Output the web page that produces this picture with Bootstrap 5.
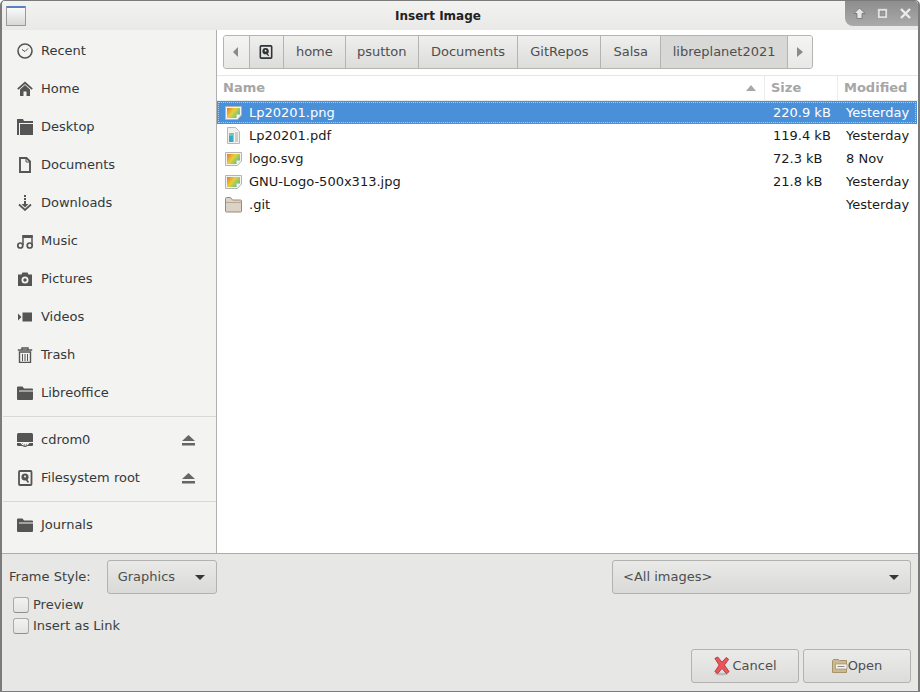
<!DOCTYPE html>
<html lang="en">
<head>
    <meta charset="UTF-8">
    <title>Insert Image</title>
    <link href="https://cdn.jsdelivr.net/npm/bootstrap@5.3.0/dist/css/bootstrap.min.css" rel="stylesheet">
    <style>
        html, body { margin: 0; height: 692px; overflow: hidden; background: #fff; }
        body { font-family: "DejaVu Sans", sans-serif; font-size: 13px; color: #33393b; }
        .dlg-window { width: 920px; height: 692px; border: 1px solid #7b7b7b; border-left-width: 2px; border-right-width: 2px; border-radius: 5px 5px 0 0; overflow: hidden; }

        .dlg-title { height: 29px; flex: none; background: linear-gradient(#f2f2f0, #e9e9e7); }
        .dlg-appicon { width: 20px; height: 20px; margin: 5px 0 0 4px; border: 1px solid #9a9a9a; border-radius: 1px; background: linear-gradient(#fafafa, #d8d8d8); border-top: 2px solid #5b82bd; }
        .dlg-title-text { font-weight: 700; font-size: 12px; color: #222; line-height: 30px; text-align: center; flex: 1; padding-left: 5px; }
        .dlg-winbtns { width: 73px; height: 25px; background: linear-gradient(#8d8d8d, #aaa); border-radius: 0 0 0 8px; gap: 10px; padding-left: 8px; }

        .dlg-side { width: 215px; background: #f3f3f1; border-right: 1px solid #b0b0ae; padding-top: 2px; }
        .side-row { height: 38px; padding-left: 15px; gap: 8px; }
        .side-row span { flex: 1; }
        .side-row svg { flex: none; }
        .side-eject { margin-right: 21px; }
        .side-sep { height: 1px; background: #d8d8d6; margin: 4px 0 4px 1px; }

        .dlg-main { background: #fff; min-width: 0; }
        .path-wrap { height: 46px; padding: 5px 0 0 6px; border-bottom: 1px solid #e6e6e4; }
        .path-bar { width: 590px; height: 34px; border: 1px solid #b4b4b2; border-radius: 3px; overflow: hidden; background: linear-gradient(#efefed, #dcdcda); color: #4d4f50; }
        .path-seg { height: 100%; border-right: 1px solid #b4b4b2; justify-content: center; align-items: center; display: flex; }
        .path-seg:last-child { border-right: 0; }
        .path-seg.current { background: #d8d8d6; }
        .path-seg.arrowseg { background: linear-gradient(#f4f4f2, #e8e8e6); }

        .list-head { height: 25px; font-weight: 700; color: #a6a6a6; border-bottom: 1px solid #ececea; }
        .list-head > div { padding-left: 6px; line-height: 24px; border-right: 1px solid #ececea; }
        .col-fname { width: 548px; }
        .col-fsize { width: 73px; }
        .col-fdate { width: 79px; }
        .file-row { height: 23px; color: #1a1a1a; align-items: center; width: 700px; }
        .file-row .col-fname { padding-left: 8px; gap: 7px; display: flex; align-items: center; }
        .file-row .col-fsize { padding-left: 8px; }
        .file-row .col-fdate { padding-left: 8px; white-space: nowrap; }
        .file-row.picked { background: #4a90d9; color: #fff; outline: 1px dotted #a9ccef; outline-offset: -2px; }

        .dlg-bottom { background: #e7e7e5; height: 138px; flex: none; border-top: 1px solid #acacaa; padding: 6px 7px 0 7px; color: #3c3f40; }
        .combo-box { height: 34px; border: 1px solid #b2b2b0; border-radius: 3px; background: linear-gradient(#e9e9e7, #d9d9d7); padding: 0 11px 0 10px; color: #4d4f50; }
        .combo-frame { width: 110px; margin-left: 16px; }
        .combo-all { width: 299px; }
        .combo-caret { width: 0; height: 0; border-left: 5px solid transparent; border-right: 5px solid transparent; border-top: 5px solid #33393b; }
        .check-row { height: 21px; padding-left: 4px; gap: 4px; }
        .check-mark { width: 16px; height: 16px; border: 1px solid #aaa; border-bottom-color: #8f8f8f; border-radius: 3px; background: linear-gradient(#f2f2f0, #e4e4e2); }
        .dlg-btn { width: 108px; height: 34px; border: 1px solid #b2b2b0; border-radius: 3px; background: linear-gradient(#ebebe9, #dcdcda); color: #4d4f50; }
        .btn-zone { margin-top: 13px; gap: 4px; }
        .cancel-icon { margin-right: 1px; }
    </style>
</head>
<body>
<div class="dlg-window d-flex flex-column">
    <div class="dlg-title d-flex">
        <div class="dlg-appicon"></div>
        <div class="dlg-title-text">Insert Image</div>
        <div class="dlg-winbtns d-flex align-items-center">
            <svg width="13" height="13" viewBox="0 0 13 13"><path d="M6.500 1 1 6.500h3v5h5v-5h3z" fill="#e6e6e6" stroke="#666" stroke-width=".7"/></svg>
            <svg width="13" height="13" viewBox="0 0 13 13"><path d="M1.500 1.500h10v10h-10z M4 4v5h5V4z" fill="#e0e0e0" fill-rule="evenodd" stroke="#777" stroke-width=".4"/></svg>
            <svg width="13" height="13" viewBox="0 0 13 13"><path d="M2 2l9 9M11 2l-9 9" stroke="#ececec" stroke-width="2.400"/></svg>
        </div>
    </div>

    <div class="d-flex flex-grow-1" style="min-height:0">
        <div class="dlg-side">
            <div class="side-row d-flex align-items-center">
                <svg width="16" height="16" viewBox="0 0 16 16"><circle cx="8" cy="8" r="7" fill="none" stroke="#555" stroke-width="1.600"/><path d="M5 6.500l3 2 3-3" fill="none" stroke="#555"/></svg><span>Recent</span>
            </div>
            <div class="side-row d-flex align-items-center">
                <svg width="16" height="16" viewBox="0 0 16 16"><path d="M.8 8.200 8 1.800l7.200 6.400" fill="none" stroke="#555" stroke-width="1.800"/><path d="M3 8.500 8 4l5 4.500V15H9.500v-4.500h-3V15H3z" fill="#555"/></svg><span>Home</span>
            </div>
            <div class="side-row d-flex align-items-center">
                <svg width="16" height="16" viewBox="0 0 16 16"><path d="M0 0h6l1 2h9v2H2v12H0z" fill="#555"/><path d="M3 5h13v11H3z" fill="#555"/></svg><span>Desktop</span>
            </div>
            <div class="side-row d-flex align-items-center">
                <svg width="16" height="16" viewBox="0 0 16 16"><path d="M3 1h6.500l3.500 3.500V15H3z" fill="none" stroke="#555" stroke-width="1.900"/><path d="M9 1v4h4" fill="none" stroke="#555"/></svg><span>Documents</span>
            </div>
            <div class="side-row d-flex align-items-center">
                <svg width="16" height="16" viewBox="0 0 16 16"><path d="M7 0h2v2H7zM7 3h2v2H7zM7 6h2v3h2.500L8 12.500 4.500 9H7z" fill="#555"/><path d="M2 9.500 8 15l6-5.500" fill="none" stroke="#555" stroke-width="1.700"/></svg><span>Downloads</span>
            </div>
            <div class="side-row d-flex align-items-center">
                <svg width="16" height="16" viewBox="0 0 16 16"><path d="M6 12V3h9v9" fill="none" stroke="#555" stroke-width="1.500"/><path d="M5.500 2h10v3h-10z" fill="#555"/><circle cx="3.300" cy="12.500" r="2.500" fill="none" stroke="#555" stroke-width="1.700"/><circle cx="12.700" cy="12.500" r="2.500" fill="none" stroke="#555" stroke-width="1.700"/></svg><span>Music</span>
            </div>
            <div class="side-row d-flex align-items-center">
                <svg width="16" height="16" viewBox="0 0 16 16"><path d="M1 3.500h3.500L5.500 1.500h5l1 2H15V15H1zM8 5.500a3.500 3.500 0 1 0 0 7 3.500 3.500 0 0 0 0-7z" fill="#555" fill-rule="evenodd"/><circle cx="8" cy="9" r="1.700" fill="#555"/></svg><span>Pictures</span>
            </div>
            <div class="side-row d-flex align-items-center">
                <svg width="16" height="16" viewBox="0 0 16 16"><path d="M5.500 3.500H15v9H5.500zM1 4.500 4.500 8 1 11.500z" fill="#555"/></svg><span>Videos</span>
            </div>
            <div class="side-row d-flex align-items-center">
                <svg width="16" height="16" viewBox="0 0 16 16"><path d="M.8 3h14.400M5 3V1h6v2" fill="none" stroke="#555" stroke-width="1.400"/><path d="M2.500 5h11v10.500h-11z" fill="none" stroke="#555" stroke-width="1.400"/><path d="M5.500 7v7M8 7v7M10.500 7v7" stroke="#555"/></svg><span>Trash</span>
            </div>
            <div class="side-row d-flex align-items-center">
                <svg width="16" height="16" viewBox="0 0 16 16"><path d="M0 2.500a1 1 0 0 1 1-1h4.500l1.500 2h8a1 1 0 0 1 1 1V14a1 1 0 0 1-1 1H1a1 1 0 0 1-1-1z" fill="#555"/><path d="M2 5.500h14v1H2z" fill="#f3f3f1"/></svg><span>Libreoffice</span>
            </div>
            <div class="side-sep"></div>
            <div class="side-row d-flex align-items-center">
                <svg width="16" height="16" viewBox="0 0 16 16"><path d="M1.500 1h13a1.500 1.500 0 0 1 1.500 1.500V10H0V2.500A1.500 1.500 0 0 1 1.500 1zM0 11h3.500a5 5 0 0 0 9 0H16v2a1 1 0 0 1-1 1h-4.500a4 4 0 0 1-5 0H1a1 1 0 0 1-1-1z" fill="#555"/><path d="M5.500 11.500a3 3 0 0 0 5 0" fill="none" stroke="#555" stroke-dasharray="1 1"/></svg><span>cdrom0</span>
                <svg class="side-eject" width="13" height="12" viewBox="0 0 13 12"><path d="M6.500 1 13 7H0zM0 9h13v2.500H0z" fill="#666"/></svg>
            </div>
            <div class="side-row d-flex align-items-center">
                <svg width="16" height="16" viewBox="0 0 16 16"><rect x="2" y="1" width="12.500" height="14" rx="1" fill="none" stroke="#555" stroke-width="1.800"/><circle cx="8" cy="7" r="3.600" fill="#555"/><circle cx="8" cy="6.500" r="1" fill="#f3f3f1"/><path d="M8.500 8.500l3 4" stroke="#555" stroke-width="1.500"/></svg><span>Filesystem root</span>
                <svg class="side-eject" width="13" height="12" viewBox="0 0 13 12"><path d="M6.500 1 13 7H0zM0 9h13v2.500H0z" fill="#666"/></svg>
            </div>
            <div class="side-sep"></div>
            <div class="side-row d-flex align-items-center">
                <svg width="16" height="16" viewBox="0 0 16 16"><path d="M0 2.500a1 1 0 0 1 1-1h4.500l1.500 2h8a1 1 0 0 1 1 1V14a1 1 0 0 1-1 1H1a1 1 0 0 1-1-1z" fill="#555"/><path d="M2 5.500h14v1H2z" fill="#f3f3f1"/></svg><span>Journals</span>
            </div>
        </div>

        <div class="dlg-main flex-grow-1">
            <div class="path-wrap">
                <div class="path-bar d-flex">
                    <div class="path-seg arrowseg" style="width:26px"><svg width="6" height="10" viewBox="0 0 6 10"><path d="M5 0v10L0 5z" fill="#8a8a8a"/></svg></div>
                    <div class="path-seg" style="width:34px"><svg width="14" height="16" viewBox="0 0 16 16"><rect x="1.500" y="1" width="13" height="14" rx="1" fill="none" stroke="#2e3436" stroke-width="1.800"/><circle cx="7.500" cy="7" r="3.600" fill="#2e3436"/><circle cx="7.500" cy="6.500" r="1" fill="#fff"/><path d="M8 8.500l3 4" stroke="#2e3436" stroke-width="1.500"/></svg></div>
                    <div class="path-seg" style="width:62px">home</div>
                    <div class="path-seg" style="width:73px">psutton</div>
                    <div class="path-seg" style="width:100px">Documents</div>
                    <div class="path-seg" style="width:83px">GitRepos</div>
                    <div class="path-seg" style="width:60px">Salsa</div>
                    <div class="path-seg current" style="width:127px">libreplanet2021</div>
                    <div class="path-seg arrowseg" style="width:24px"><svg width="6" height="10" viewBox="0 0 6 10"><path d="M0 0v10l6-5z" fill="#8a8a8a"/></svg></div>
                </div>
            </div>
            <div class="list-head d-flex">
                <div class="col-fname d-flex justify-content-between align-items-center">Name <svg class="me-2" width="10" height="6" viewBox="0 0 10 6"><path d="M0 6h10L5 0z" fill="#a8a8a8"/></svg></div>
                <div class="col-fsize">Size</div>
                <div class="col-fdate" style="border:0">Modified</div>
            </div>
            <div class="file-row picked d-flex">
                <div class="col-fname">
                    <svg width="17" height="15" viewBox="0 0 17 15"><defs><linearGradient id="pic" x1="0" y1="0" x2="1" y2=".6"><stop offset="0" stop-color="#e8762a"/><stop offset=".5" stop-color="#e8d03a"/><stop offset="1" stop-color="#5cc08a"/></linearGradient></defs><path d="M.5 1.500h16v8.500l-4 4.500H.5z" fill="#f2f2f0" stroke="#b4b4b0"/><path d="M2 3h13v6.500H11.500V13H2z" fill="url(#pic)"/></svg>
                    <span>Lp20201.png</span>
                </div>
                <div class="col-fsize">220.9 kB</div>
                <div class="col-fdate">Yesterday</div>
            </div>
            <div class="file-row d-flex">
                <div class="col-fname">
                    <svg width="17" height="17" viewBox="0 0 17 17"><path d="M2.500.5h8l4 4v12h-12z" fill="#f0f0ee" stroke="#b8b8b4"/><path d="M4 6h4.500v9H4z" fill="#3aa8c8"/><path d="M4 6h4.500v3H4z" fill="#6fc8a0"/><path d="M10 6h3M10 8h3M10 10h3M10 12h3M10 14h3" stroke="#aaa"/></svg>
                    <span>Lp20201.pdf</span>
                </div>
                <div class="col-fsize">119.4 kB</div>
                <div class="col-fdate">Yesterday</div>
            </div>
            <div class="file-row d-flex">
                <div class="col-fname">
                    <svg width="17" height="15" viewBox="0 0 17 15"><path d="M.5 1.500h16v8.500l-4 4.500H.5z" fill="#f2f2f0" stroke="#b4b4b0"/><path d="M2 3h13v6.500H11.500V13H2z" fill="url(#pic)"/></svg>
                    <span>logo.svg</span>
                </div>
                <div class="col-fsize">72.3 kB</div>
                <div class="col-fdate">8 Nov</div>
            </div>
            <div class="file-row d-flex">
                <div class="col-fname">
                    <svg width="17" height="15" viewBox="0 0 17 15"><path d="M.5 1.500h16v8.500l-4 4.500H.5z" fill="#f2f2f0" stroke="#b4b4b0"/><path d="M2 3h13v6.500H11.500V13H2z" fill="url(#pic)"/></svg>
                    <span>GNU-Logo-500x313.jpg</span>
                </div>
                <div class="col-fsize">21.8 kB</div>
                <div class="col-fdate">Yesterday</div>
            </div>
            <div class="file-row d-flex">
                <div class="col-fname">
                    <svg width="17" height="16" viewBox="0 0 17 16"><path d="M.5 1.500a1 1 0 0 1 1-1h4l2 2.500h8a1 1 0 0 1 1 1v10a1 1 0 0 1-1 1h-14a1 1 0 0 1-1-1z" fill="#dcd2c6" stroke="#9c8a78"/><path d="M1 5.500h15" stroke="#9c8a78" stroke-width=".6"/></svg>
                    <span>.git</span>
                </div>
                <div class="col-fsize"></div>
                <div class="col-fdate">Yesterday</div>
            </div>
        </div>
    </div>

    <div class="dlg-bottom">
        <div class="d-flex justify-content-between align-items-center">
            <div class="d-flex align-items-center">
                <span>Frame Style:</span>
                <div class="combo-box combo-frame d-flex align-items-center justify-content-between"><span>Graphics</span><i class="combo-caret"></i></div>
            </div>
            <div class="combo-box combo-all d-flex align-items-center justify-content-between"><span>&lt;All images&gt;</span><i class="combo-caret"></i></div>
        </div>
        <div class="check-row d-flex align-items-center"><i class="check-mark"></i><span>Preview</span></div>
        <div class="check-row d-flex align-items-center"><i class="check-mark"></i><span>Insert as Link</span></div>
        <div class="btn-zone d-flex justify-content-end">
            <div class="dlg-btn d-flex align-items-center justify-content-center">
                <svg class="cancel-icon" width="18" height="20" viewBox="0 0 19 20"><ellipse cx="9" cy="18.500" rx="7" ry="1.500" fill="#bbb"/><path d="M2 2l3-1.500 4.500 5.500L14 1l2.500 2-4.500 6 5 7-3 2-4.500-5.500L5 18l-3-2 4.500-7z" fill="#e8555a" stroke="#b8383c"/></svg><span>Cancel</span>
            </div>
            <div class="dlg-btn d-flex align-items-center justify-content-center">
                <svg width="16" height="16" viewBox="0 0 16 16"><path d="M.5 2.500l1-1h5l1 1h7v12h-14z" fill="#cdb98f" stroke="#a8946c"/><path d="M3.500 6h11.500v5H3.500z" fill="#f2f2f0" stroke="#96825c" stroke-width=".6"/><path d="M5.500 8.500h7" stroke="#888"/></svg><span>Open</span>
            </div>
        </div>
    </div>
</div>
<script src="https://cdn.jsdelivr.net/npm/bootstrap@5.3.0/dist/js/bootstrap.bundle.min.js"></script>
</body>
</html>
